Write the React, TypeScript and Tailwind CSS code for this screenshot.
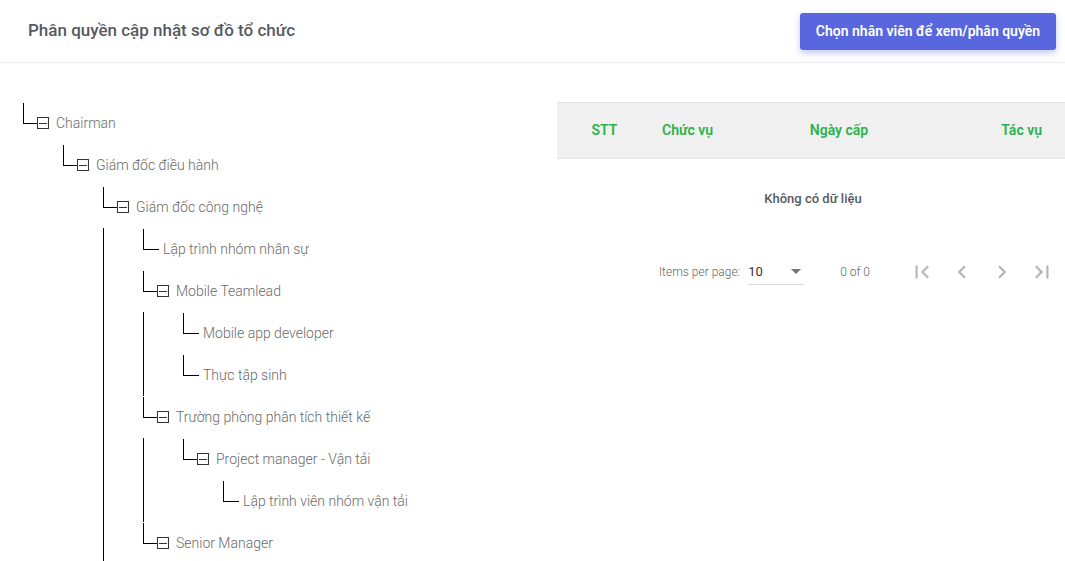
import React from "react";

type Node = { label: string; children?: Node[]; hasKids?: boolean; cont?: boolean };

const tree: Node[] = [
  {
    label: "Chairman",
    children: [
      {
        label: "Giám đốc điều hành",
        children: [
          {
            label: "Giám đốc công nghệ",
            cont: true,
            children: [
              { label: "Lập trình nhóm nhân sự" },
              {
                label: "Mobile Teamlead",
                children: [{ label: "Mobile app developer" }, { label: "Thực tập sinh" }],
              },
              {
                label: "Trường phòng phân tích thiết kế",
                children: [
                  {
                    label: "Project manager - Vận tải",
                    children: [{ label: "Lập trình viên nhóm vận tải" }],
                  },
                ],
              },
              { label: "Senior Manager", hasKids: true },
            ],
          },
        ],
      },
    ],
  },
];

function Row({ label, hasChildren }: { label: string; hasChildren: boolean }) {
  return (
    <div className="flex h-[42px] items-center">
      <div
        className={
          hasChildren
            ? "self-start mt-[1px] h-[21px] w-[14px] border-l border-b border-black"
            : "self-start mt-[1px] h-[21px] w-[16px] border-l border-b border-black"
        }
      />
      {hasChildren && (
        <div className="flex h-[12px] w-[12px] items-center justify-center border border-[#333]">
          <div className="h-px w-[8px] bg-[#333]" />
        </div>
      )}
      <span
        className={
          hasChildren
            ? "ml-[7px] whitespace-nowrap text-[14px] font-light text-[#6a6a6a]"
            : "ml-[4px] whitespace-nowrap text-[14px] font-light text-[#6a6a6a]"
        }
      >
        {label}
      </span>
    </div>
  );
}

function TreeNode({ node, hasNext }: { node: Node; hasNext: boolean }) {
  const kids = node.children ?? [];
  const showBox = kids.length > 0 || !!node.hasKids;
  const lineNext = hasNext || !!node.cont;
  return (
    <div>
      <Row label={node.label} hasChildren={showBox} />
      {(kids.length > 0 || node.cont) && (
        <div className={lineNext ? "border-l border-black pl-[39px]" : "pl-[40px]"}>
          {kids.map((k, i) => (
            <TreeNode key={k.label} node={k} hasNext={i < kids.length - 1} />
          ))}
          {node.cont && <div className="h-[60px]" />}
        </div>
      )}
    </div>
  );
}

function PagerIcon({ d }: { d: string }) {
  return (
    <div className="flex h-[40px] w-[40px] items-center justify-center">
      <svg viewBox="0 0 24 24" width="26" height="26" fill="#b5b5b5">
        <path d={d} />
      </svg>
    </div>
  );
}

export default function App() {
  return (
    <div className="h-[561px] w-[1065px] overflow-hidden bg-white font-['Roboto',sans-serif]">
      <div className="flex h-[63px] items-center justify-between border-b border-[#ebedf2] pl-[28px] pr-[9px]">
        <div className="text-[17px] font-medium text-[#575962]">Phân quyền cập nhật sơ đồ tổ chức</div>
        <button className="h-[37px] w-[256px] rounded-[3px] bg-[#5867dd] text-[14px] font-semibold text-white shadow-[0_3px_6px_rgba(88,103,221,0.35)]">
          Chọn nhân viên để xem/phân quyền
        </button>
      </div>
      <div className="flex pt-[39px]">
        <div className="w-[557px] pl-[23px]">
          {tree.map((n, i) => (
            <TreeNode key={n.label} node={n} hasNext={i < tree.length - 1} />
          ))}
        </div>
        <div className="flex-1">
          <div className="flex h-[57px] items-center border-t border-b border-[#e3e3e3] bg-[#f0f0f0] text-[14px] font-semibold text-[#2bb24c]">
            <div className="w-[95px] text-center">STT</div>
            <div className="w-[80px] pl-[10px]">Chức vụ</div>
            <div className="w-[214px] text-center">Ngày cấp</div>
            <div className="flex-1 pr-[23px] text-right">Tác vụ</div>
          </div>
          <div className="flex h-[80px] items-center justify-center pl-[4px] text-[13px] font-medium text-[#575962]">
            Không có dữ liệu
          </div>
          <div className="mt-[5px] flex h-[56px] items-center justify-end pr-[3px]">
            <span className="text-[12px] font-light text-[#666]">Items per page:</span>
            <div className="ml-[8px] flex h-[25px] w-[56px] items-center justify-between border-b border-[#dcdcdc] pr-[3px]">
              <span className="text-[13px] text-[#333]">10</span>
              <div className="h-0 w-0 border-x-[5px] border-t-[5px] border-x-transparent border-t-[#757575]" />
            </div>
            <span className="ml-[36px] mr-[32px] text-[12px] font-light text-[#666]">0 of 0</span>
            <PagerIcon d="M18.41 16.59L13.82 12l4.59-4.59L17 6l-6 6 6 6zM6 6h2v12H6z" />
            <PagerIcon d="M15.41 7.41L14 6l-6 6 6 6 1.41-1.41L10.83 12z" />
            <PagerIcon d="M10 6L8.59 7.41 13.17 12l-4.58 4.59L10 18l6-6z" />
            <PagerIcon d="M5.59 7.41L10.18 12l-4.59 4.59L7 18l6-6-6-6zM16 6h2v12h-2z" />
          </div>
        </div>
      </div>
    </div>
  );
}
